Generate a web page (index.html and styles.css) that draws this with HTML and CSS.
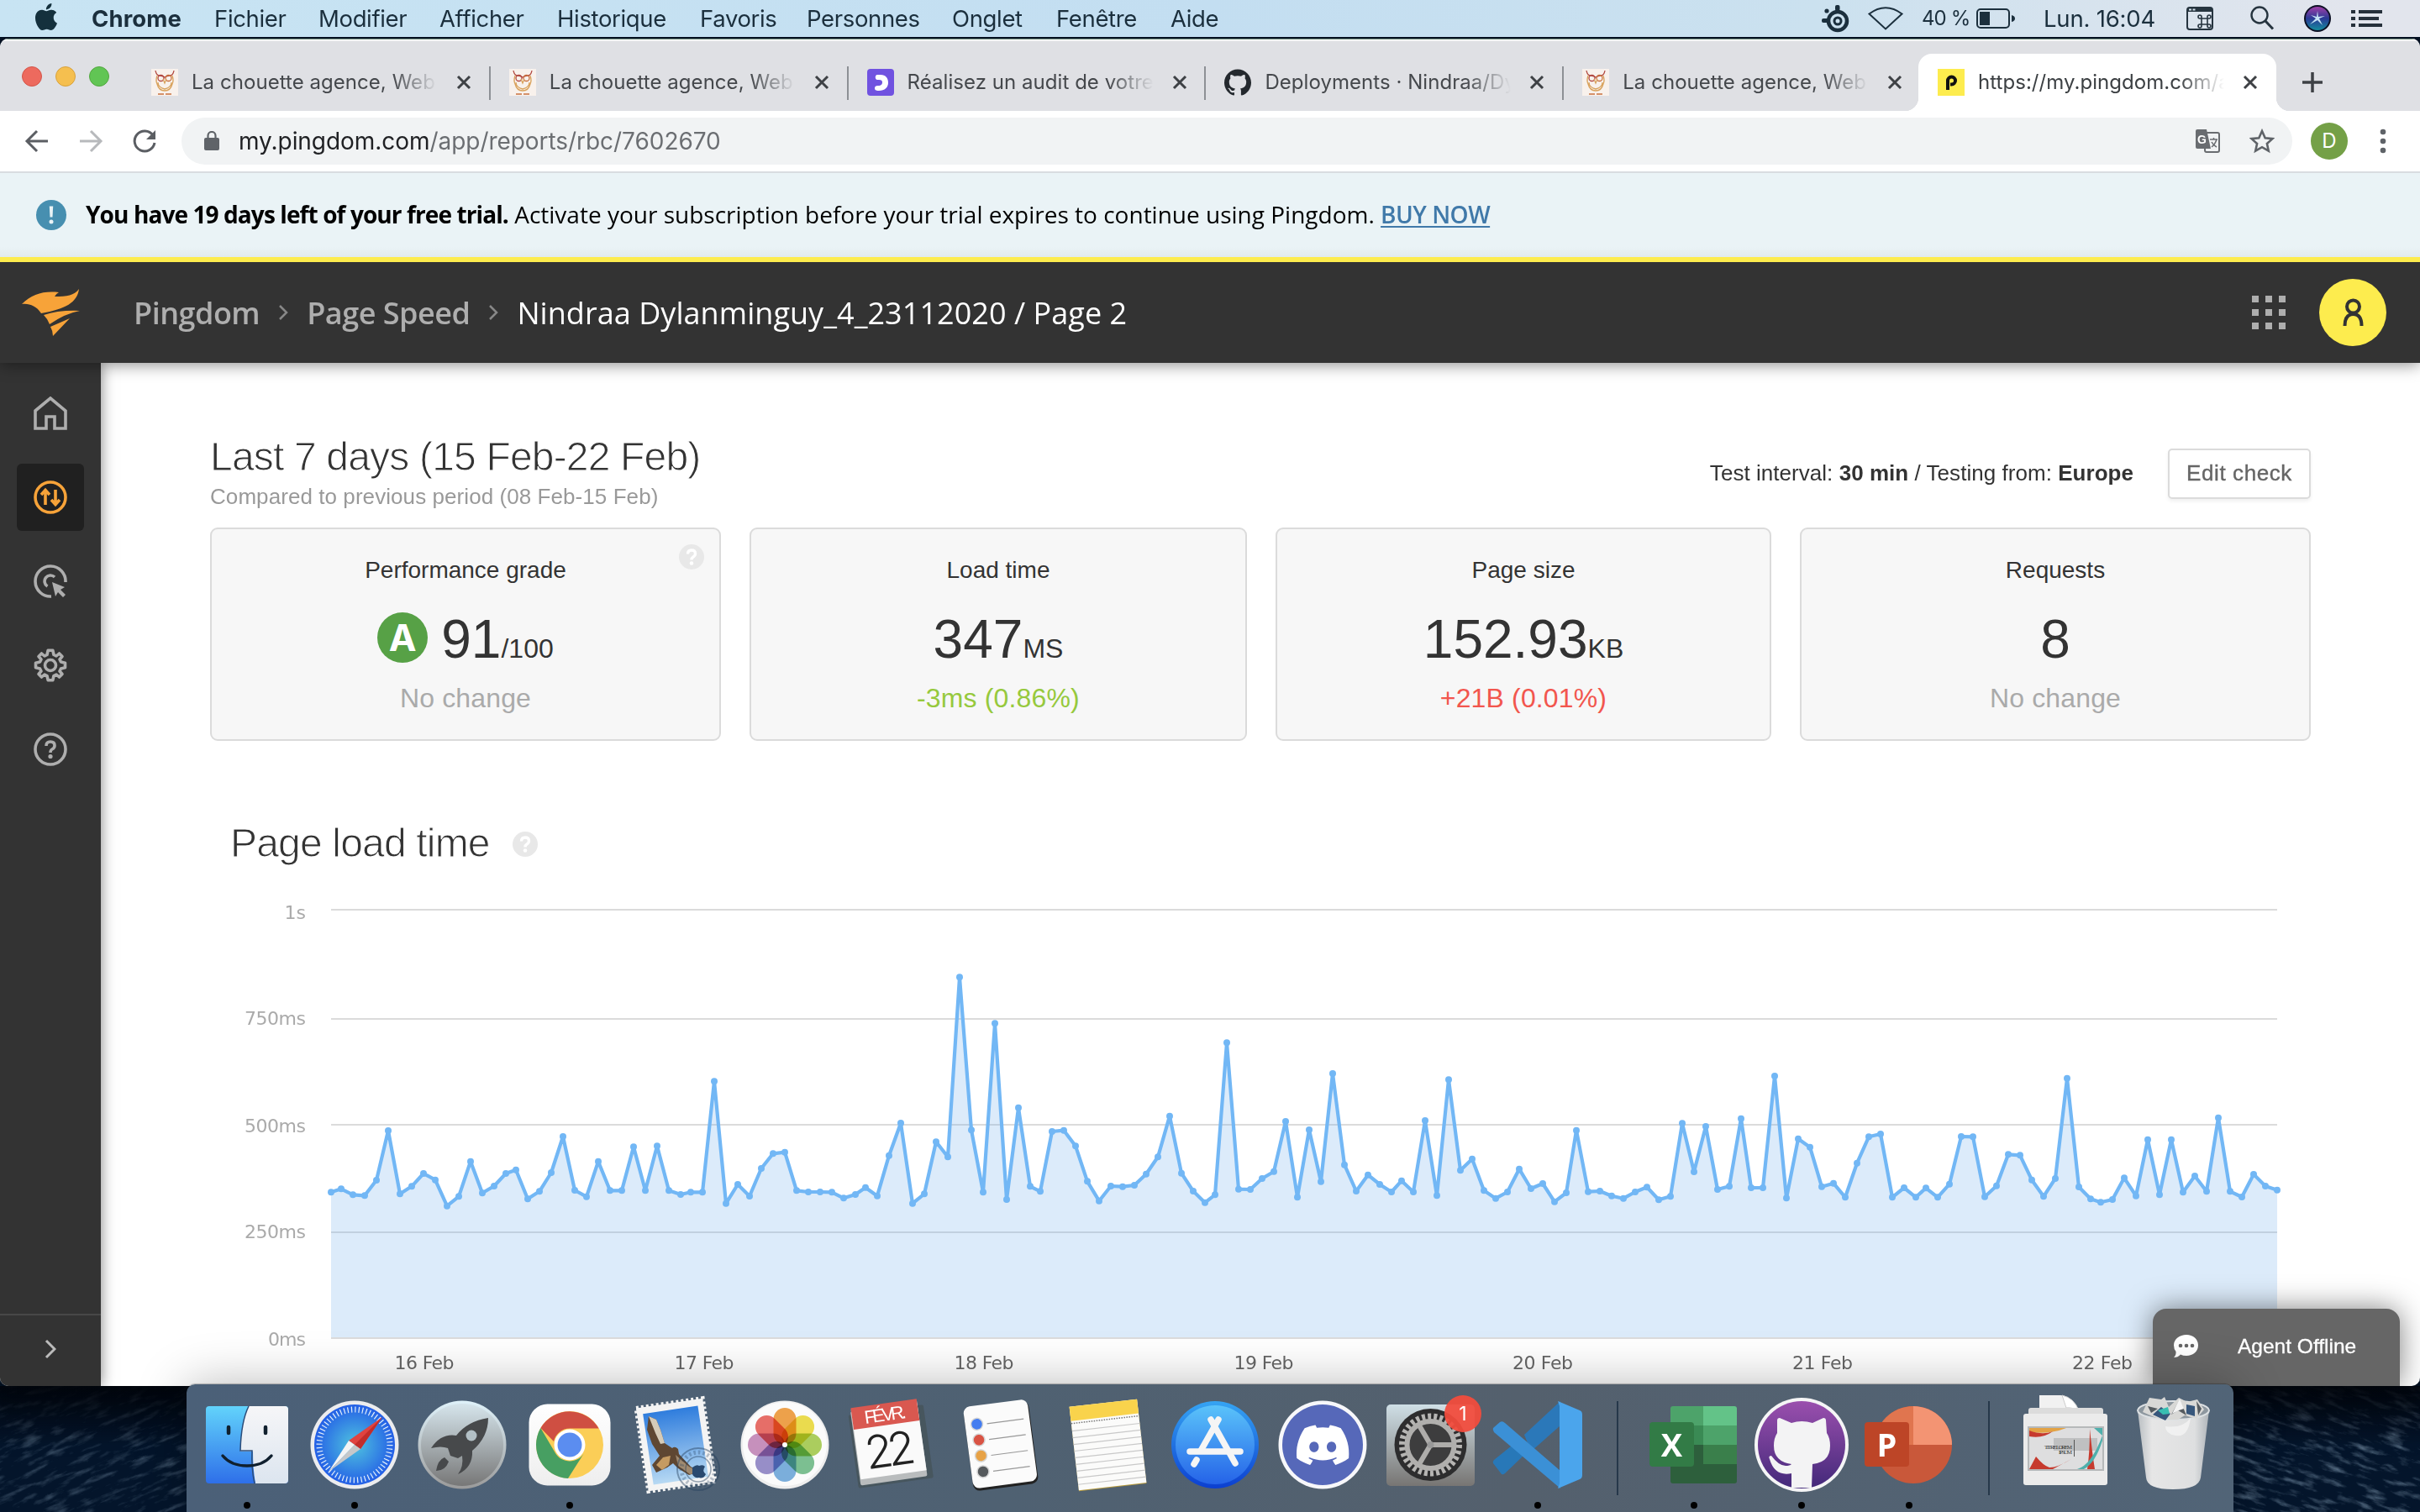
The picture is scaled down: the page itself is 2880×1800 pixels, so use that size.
FILE: index.html
```html
<!DOCTYPE html>
<html lang="fr">
<head>
<meta charset="utf-8">
<title>Pingdom</title>
<link rel="stylesheet" href="styles.css">
</head>
<body>
<svg class="sea" width="2880" height="1800" aria-hidden="true">
  <defs>
    <filter id="waves" x="0" y="0" width="100%" height="100%">
      <feTurbulence type="fractalNoise" baseFrequency="0.035 0.14" numOctaves="5" seed="8"/>
      <feColorMatrix values="0 0 0 0 0.30  0 0 0 0 0.43  0 0 0 0 0.56  2.4 0 0 0 -1.2"/>
    </filter>
    <linearGradient id="deep" x1="0" y1="0" x2="0" y2="1"><stop offset="0" stop-color="#02060f" stop-opacity=".85"/><stop offset="1" stop-color="#02060f" stop-opacity="0"/></linearGradient>
  </defs>
  <rect width="2880" height="1800" fill="#04152b"/>
  <g opacity=".6"><g transform="rotate(-22 110 1720)"><rect x="-200" y="1500" width="700" height="500" filter="url(#waves)" opacity=".65"/></g>
  <g transform="rotate(18 2770 1720)"><rect x="2400" y="1450" width="760" height="560" filter="url(#waves)"/></g></g>
  <rect y="1650" width="2880" height="70" fill="url(#deep)"/>
</svg>

<header class="menubar">
  <nav class="menus">
    <svg class="apple" viewBox="0 0 24 24"><path d="M12.152 6.896c-.948 0-2.415-1.078-3.96-1.04-2.04.027-3.91 1.183-4.961 3.014-2.117 3.675-.546 9.103 1.519 12.09 1.013 1.454 2.208 3.09 3.792 3.039 1.52-.065 2.09-.987 3.935-.987 1.831 0 2.35.987 3.96.948 1.637-.026 2.676-1.48 3.676-2.948 1.156-1.688 1.636-3.325 1.662-3.415-.039-.013-3.182-1.221-3.22-4.857-.026-3.04 2.48-4.494 2.597-4.559-1.429-2.09-3.623-2.324-4.39-2.376-2-.156-3.675 1.09-4.61 1.09zM15.53 3.83c.843-1.012 1.4-2.427 1.245-3.83-1.207.052-2.662.805-3.532 1.818-.78.896-1.454 2.338-1.273 3.714 1.338.104 2.715-.688 3.559-1.701"/></svg>
    <b>Chrome</b><span>Fichier</span><span>Modifier</span><span>Afficher</span><span>Historique</span><span>Favoris</span><span>Personnes</span><span>Onglet</span><span>Fenêtre</span><span>Aide</span>
  </nav>
  <div class="status">
    <svg width="34" height="36" viewBox="0 0 34 36"><g fill="none" stroke="#1b2f3d"><circle cx="19" cy="21" r="11" stroke-width="4.5"/><circle cx="19" cy="21" r="4" stroke-width="3"/></g><rect x="16" y="2" width="5.500" height="7" rx="2" fill="#1b2f3d"/><rect x="0" y="18" width="8" height="5" rx="2" fill="#1b2f3d"/><circle cx="6" cy="9" r="2.600" fill="#1b2f3d"/></svg>
    <svg width="42" height="30" viewBox="0 0 42 30"><path d="M1.500 9.500Q21-5 40.500 9.500L21 27.500Z" fill="none" stroke="#1b2f3d" stroke-width="2"/></svg>
    <span class="percent">40 %</span>
    <svg width="48" height="26" viewBox="0 0 48 26"><rect x="1" y="2" width="38" height="22" rx="4" fill="none" stroke="#1b2f3d" stroke-width="2"/><rect x="4" y="5" width="12" height="16" fill="#1b2f3d"/><path d="M42 9q4 1 4 4t-4 4z" fill="#1b2f3d"/></svg>
    <span class="clock">Lun. 16:04</span>
    <svg width="32" height="28" viewBox="0 0 32 28"><rect x="1" y="1" width="30" height="26" rx="3" fill="none" stroke="#26343f" stroke-width="2"/><path d="M1 1h30v5H1z" fill="#26343f"/><path d="M3 2.500h3v2H3zM7.500 2.500h3v2h-3z" fill="#d5e3ee"/><path d="M18 14h7v7h-7zM18 14h-2a2 2 0 1 1 2-2zM25 14v-2a2 2 0 1 1 2 2zM18 21v2a2 2 0 1 1-2-2zM25 21h2a2 2 0 1 1-2 2z" fill="none" stroke="#26343f" stroke-width="1.600"/></svg>
    <svg width="32" height="32" viewBox="0 0 32 32"><g fill="none" stroke="#26343f" stroke-width="2.400"><circle cx="13" cy="12" r="9.500"/><path d="M20 19l9 9.500" stroke-width="3"/></g></svg>
    <svg width="32" height="32" viewBox="0 0 32 32"><defs><linearGradient id="siri" x1="0" y1="0" x2="0" y2="1"><stop offset="0" stop-color="#a03fa8"/><stop offset=".5" stop-color="#2a3a96"/><stop offset="1" stop-color="#148c9d"/></linearGradient></defs><circle cx="16" cy="16" r="16" fill="#0c1024"/><circle cx="16" cy="16" r="14" fill="url(#siri)"/><path d="M16 7l1 7 8-1-7 3 4 8-6-6-9 5 7-7-6-4 7 2z" fill="#d5f4ff" opacity=".9"/></svg>
    <svg width="38" height="22" viewBox="0 0 38 22"><path d="M0 1h5v4H0zM9 1h28v4H9zM0 9h5v4H0zM9 9h24v4H9zM0 17h5v4H0zM9 17h28v4H9z" fill="#26303b"/></svg>
  </div>
</header>

<div class="window">
  <div class="tabstrip">
    <div class="lights"><i class="red"></i><i class="amber"></i><i class="green"></i></div>
    <div class="tab"><svg class="fav" viewBox="0 0 32 32"><use href="#owl"/></svg><span class="label">La chouette agence, Web D</span><svg class="close" viewBox="0 0 18 18"><path d="M2 2l14 14M16 2L2 16"/></svg></div>
    <div class="tab"><svg class="fav" viewBox="0 0 32 32"><use href="#owl"/></svg><span class="label">La chouette agence, Web D</span><svg class="close" viewBox="0 0 18 18"><path d="M2 2l14 14M16 2L2 16"/></svg></div>
    <div class="tab"><svg class="fav" viewBox="0 0 32 32"><rect width="32" height="32" rx="4" fill="#7052e0"/><path d="M12 7h4c6 0 9 4 9 9.500S21 26 14 26c-4 0-5-1-5-3s1-3 4-3c4 0 5-2 5-4s-1-3-4-3h-2c-3 0-3-6 0-6z" fill="#fff"/></svg><span class="label">Réalisez un audit de votre s</span><svg class="close" viewBox="0 0 18 18"><path d="M2 2l14 14M16 2L2 16"/></svg></div>
    <div class="tab"><svg class="fav" viewBox="0 0 24 24"><use href="#octocat" fill="#24292e"/></svg><span class="label">Deployments · Nindraa/Dyla</span><svg class="close" viewBox="0 0 18 18"><path d="M2 2l14 14M16 2L2 16"/></svg></div>
    <div class="tab last"><svg class="fav" viewBox="0 0 32 32"><use href="#owl"/></svg><span class="label">La chouette agence, Web D</span><svg class="close" viewBox="0 0 18 18"><path d="M2 2l14 14M16 2L2 16"/></svg></div>
    <div class="tab active"><svg class="fav" viewBox="0 0 32 32"><path fill="#fdec4e" d="M0 0h32v32H0z"/><path d="M12 25V14a4.500 4.500 0 1 1 4.500 4.500H15" fill="none" stroke="#111" stroke-width="4"/></svg><span class="label">https://my.pingdom.com/ap</span><svg class="close" viewBox="0 0 18 18"><path d="M2 2l14 14M16 2L2 16"/></svg></div>
    <svg class="newtab" viewBox="0 0 24 24"><path d="M12 0v24M0 12h24"/></svg>
  </div>

  <div class="toolbar">
    <svg class="nav" viewBox="0 0 32 32"><path d="M29 16H5M16 4L4 16l12 12" stroke="#5b5e63"/></svg>
    <svg class="nav" viewBox="0 0 32 32"><path d="M3 16h24M16 4l12 12-12 12" stroke="#b7b9bc"/></svg>
    <svg class="nav" viewBox="0 0 32 32"><path d="M26 9A12 12 0 1 0 28 18" stroke="#5b5e63"/><path d="M29 3v11H18z" fill="#5b5e63"/></svg>
    <div class="omnibox">
      <svg width="18" height="24" viewBox="0 0 18 24"><rect y="8" width="18" height="15" rx="2" fill="#5f6368"/><path d="M4.500 9V5.500a4.500 4.500 0 0 1 9 0V9" fill="none" stroke="#5f6368" stroke-width="2.200"/></svg>
      <span class="url">my.pingdom.com<em>/app/reports/rbc/7602670</em></span>
      <svg class="translate" width="30" height="30" viewBox="0 0 30 30"><rect x="11" y="5" width="17" height="23" rx="2" fill="none" stroke="#696c70" stroke-width="2"/><path d="M2 1h11l5 23H2a2 2 0 0 1-2-2V3a2 2 0 0 1 2-2z" fill="#696c70"/><text x="2" y="18" font-size="14" fill="#fff" class="g">G</text><path d="M17 13h9M21.500 11v2M25 13q-2 6-6 9M19 16q2 4 6 6" fill="none" stroke="#696c70" stroke-width="1.500"/></svg>
      <svg width="30" height="30" viewBox="0 0 30 30"><path d="M15 3l3.700 8.200 8.800.9-6.600 5.900 1.900 8.700L15 22.200l-7.800 4.500L9.100 18 2.500 12.100l8.800-.9z" fill="none" stroke="#5f6368" stroke-width="2.600"/></svg>
    </div>
    <div class="profile">D</div>
    <svg class="kebab" viewBox="0 0 8 30"><circle cx="4" cy="4" r="3.300"/><circle cx="4" cy="15" r="3.300"/><circle cx="4" cy="26" r="3.300"/></svg>
  </div>

  <div class="trial">
    <svg width="36" height="36" viewBox="0 0 36 36"><circle cx="18" cy="18" r="18" fill="#478fb0"/><path d="M15.800 7.500h4.400l-.7 13h-3z" fill="#eaf3f6"/><circle cx="18" cy="26" r="2.500" fill="#eaf3f6"/></svg>
    <p><b>You have 19 days left of your free trial.</b> <span>Activate your subscription before your trial expires to continue using Pingdom.</span> <a>BUY NOW</a></p>
  </div>

  <div class="appbar">
    <svg class="logo" viewBox="0 0 70 56"><g fill="#f7a339"><path d="M0 18C12 6 26 2 44 4q-3 1.500-5 5C54 9 62 8 68 0 66 16 52 24 23 29 17 20 9 17 0 18z"/><path d="M26 31Q44 25 69 26 52 29 33 42 31 36 26 31z"/><path d="M34 45L57 35 37 56Q37 50 34 45z"/></g></svg>
    <div class="crumbs">
      <b>Pingdom</b><svg viewBox="0 0 12 20"><path d="M2 2l8 8-8 8"/></svg><b>Page Speed</b><svg viewBox="0 0 12 20"><path d="M2 2l8 8-8 8"/></svg><span>Nindraa Dylanminguy_4_23112020 / Page 2</span>
    </div>
    <svg class="waffle" viewBox="0 0 40 40"><path d="M0 0h8v8H0zM16 0h8v8h-8zM32 0h8v8h-8zM0 16h8v8H0zM16 16h8v8h-8zM32 16h8v8h-8zM0 32h8v8H0zM16 32h8v8h-8zM32 32h8v8h-8z" fill="#aeaeae"/></svg>
    <div class="user"><svg viewBox="0 0 24 34"><g fill="none" stroke="#333" stroke-width="4"><circle cx="12" cy="10" r="7.500"/><path d="M2 33q0-14 10-14t10 14"/></g></svg></div>
  </div>

  <div class="workspace">
    <aside class="sidebar">
      <div class="item"><svg viewBox="0 0 40 40"><path d="M2 17L20 2l18 15v21H25V24h-10v14H2z"/></svg></div>
      <div class="item on"><svg viewBox="0 0 40 40"><circle cx="20" cy="20" r="18"/><path d="M14 29V12m-5 5l5-5.500L19 17M26 11v17m-5-5l5 5.500 5-5.500"/></svg></div>
      <div class="item"><svg viewBox="0 0 40 40"><path d="M38 21A18 18 0 1 0 21 38M25 15a7 7 0 1 0-8.500 11"/><path d="M22 21l15 6-5 3 6 6-3 3-6-6-3 5z" fill="#aeaeae" stroke="none"/></svg></div>
      <div class="item"><svg viewBox="-20 -20 40 40"><path stroke-linejoin="round" d="M12.500-4L17.500-2.800V2.800L12.500 4 11 7 14 10.500 10.500 14 7 11 4 12.500 2.800 17.800H-2.800L-4 12.500-7 11-10.500 14-14 10.500-11 7-12.500 4-17.500 2.800V-2.800L-12.500-4-11-7-14-10.500-10.500-14-7-11-4-12.500-2.800-17.800H2.800L4-12.500 7-11 10.500-14 14-10.500 11-7z"/><circle r="6.500"/></svg></div>
      <div class="item"><svg viewBox="0 0 40 40"><circle cx="20" cy="20" r="18"/><path d="M15 16q0-5 5-5t5 4.500q0 3-3 4.500-2 1-2 4"/><circle cx="20" cy="28.500" r="2.600" fill="#aeaeae" stroke="none"/></svg></div>
      <div class="expand"><svg viewBox="0 0 14 24"><path d="M2 2l10 10L2 22"/></svg></div>
    </aside>

    <main>
      <div class="summary">
        <div class="period"><h1>Last 7 days (15 Feb-22 Feb)</h1><p>Compared to previous period (08 Feb-15 Feb)</p></div>
        <p class="interval">Test interval: <b>30 min</b> / Testing from: <b>Europe</b></p>
        <button class="edit">Edit check</button>
      </div>

      <div class="cards">
        <section class="card"><svg class="hint corner" viewBox="0 0 30 30"><use href="#hint"/></svg><h2>Performance grade</h2><div class="value"><span class="grade">A</span>91<small>/100</small></div><p>No change</p></section>
        <section class="card"><h2>Load time</h2><div class="value">347<small>MS</small></div><p class="good">-3ms (0.86%)</p></section>
        <section class="card"><h2>Page size</h2><div class="value">152.93<small>KB</small></div><p class="bad">+21B (0.01%)</p></section>
        <section class="card"><h2>Requests</h2><div class="value">8</div><p>No change</p></section>
      </div>

      <div class="chart-head"><h1>Page load time</h1><svg class="hint" viewBox="0 0 30 30"><use href="#hint"/></svg></div>
      <svg class="chart" viewBox="270 1060 2480 590">
        <g fill="#dbdbdb"><path d="M394 1082h2316v2H394zM394 1212h2316v2H394zM394 1338h2316v2H394zM394 1466h2316v2H394zM394 1592h2316v2H394z"/></g>
        <polygon id="area" fill="#7cb5ec" fill-opacity=".27"/>
        <polyline id="line" fill="none" stroke="#72b7f5" stroke-width="4.200" stroke-linejoin="round"/>
        <g id="dots" fill="#72b7f5"></g>
        <g class="ylabels">
          <text x="364" y="1094">1s</text><text x="364" y="1220" textLength="73">750ms</text><text x="364" y="1348" textLength="73">500ms</text><text x="364" y="1474" textLength="73">250ms</text><text x="364" y="1602" textLength="45">0ms</text>
        </g>
        <g class="xlabels">
          <text x="505" y="1630" textLength="71">16 Feb</text><text x="838" y="1630" textLength="71">17 Feb</text><text x="1171" y="1630" textLength="71">18 Feb</text><text x="1504" y="1630" textLength="71">19 Feb</text><text x="1836" y="1630" textLength="72">20 Feb</text><text x="2169" y="1630" textLength="72">21 Feb</text><text x="2502" y="1630" textLength="72">22 Feb</text>
        </g>
      </svg>
    </main>
  </div>

  <div class="agent"><svg viewBox="0 0 30 28"><path d="M15 0C23 0 29 5 29 12.500S23 25 15 25q-4 0-7-1.500Q5 27 0 27q3-3 2.500-7Q0 17 0 12.500C0 5 7 0 15 0z" fill="#fff"/><g fill="#666"><circle cx="8" cy="13" r="2.300"/><circle cx="15" cy="13" r="2.300"/><circle cx="22" cy="13" r="2.300"/></g></svg><span>Agent Offline</span></div>
</div>

<div class="dock">
  <svg class="app" viewBox="0 0 128 152"><defs><linearGradient id="fb" x1="0" y1="0" x2="0" y2="1"><stop offset="0" stop-color="#62d3fb"/><stop offset="1" stop-color="#2e6fe9"/></linearGradient><linearGradient id="fw" x1="0" y1="0" x2="0" y2="1"><stop offset="0" stop-color="#f6f6f8"/><stop offset="1" stop-color="#dce5ef"/></linearGradient></defs><rect x="15" y="26" width="98" height="92" rx="4" fill="url(#fb)"/><path d="M66 26h43q4 0 4 4v84q0 4-4 4H74q-3-17-3-38H56q1-36 10-54z" fill="url(#fw)"/><path d="M66 26q-9 18-10 53h14q-1 21 3 39" fill="none" stroke="#2b4c78" stroke-width="1.500"/><path d="M42 51v7M86 51v7" stroke="#10202e" stroke-width="4.500" stroke-linecap="round"/><path d="M35 85q10 12 29 12t29-12" fill="none" stroke="#10202e" stroke-width="3.500" stroke-linecap="round"/><circle class="run" cx="64" cy="144" r="4"/></svg>

  <svg class="app" viewBox="0 0 128 152"><defs><radialGradient id="sf"><stop offset="0" stop-color="#4fc3df"/><stop offset="1" stop-color="#245fe6"/></radialGradient></defs><circle cx="64" cy="72" r="52.500" fill="#ececee"/><circle cx="64" cy="72" r="48" fill="url(#sf)"/><circle cx="64" cy="72" r="42" fill="none" stroke="#e5f0fb" stroke-width="7" stroke-dasharray="1.200 3.198"/><path d="M97 39L71 77 57 67z" fill="#e04340"/><path d="M97 39L71 77 64 72z" fill="#c22d2b"/><path d="M33 104L57 67 64 72z" fill="#f4f4f4"/><path d="M33 104L71 77 64 72z" fill="#c6c8ca"/><circle class="run" cx="64" cy="144" r="4"/></svg>

  <svg class="app" viewBox="0 0 128 152"><defs><linearGradient id="lp" x1="0" y1="0" x2="0" y2="1"><stop offset="0" stop-color="#d6e5ec"/><stop offset="1" stop-color="#777"/></linearGradient><linearGradient id="lr" x1="0" y1="0" x2="0" y2="1"><stop offset="0" stop-color="#dff2fa"/><stop offset="1" stop-color="#9a9a9a"/></linearGradient></defs><circle cx="64" cy="72" r="52.500" fill="url(#lr)"/><circle cx="64" cy="72" r="49" fill="url(#lp)"/><path d="M95 40Q70 44 57 61 39 58 27 76q12-3 20 0l3 9 9 3 5-3q2 13-5 22 18-8 17-28Q95 63 95 40z" fill="#47494b"/><circle cx="75" cy="61" r="6.500" fill="#b3c0c6"/><path d="M43 87q-8 3-10 16 11 0 15-11z" fill="#47494b"/></svg>

  <svg class="app" viewBox="0 0 128 152"><defs><linearGradient id="cw" x1="0" y1="0" x2="0" y2="1"><stop offset="0" stop-color="#fff"/><stop offset="1" stop-color="#eee"/></linearGradient></defs><rect x="15.500" y="23.500" width="97" height="97" rx="22" fill="url(#cw)"/><circle cx="64" cy="72" r="40" fill="#fbce57"/><path d="M29.400 52A40 40 0 0 1 98.600 52.500H64A19.500 19.500 0 0 0 45 68z" fill="#cf4f42"/><path d="M29.400 52A40 40 0 0 0 62 112L81 82A20 20 0 0 1 47 82z" fill="#479f62"/><circle cx="64" cy="72" r="18.500" fill="#fff"/><circle cx="64" cy="72" r="14.500" fill="#5b8df0"/><circle class="run" cx="64" cy="144" r="4"/></svg>

  <svg class="app" viewBox="0 0 128 152"><defs><linearGradient id="ml" x1="0" y1="0" x2="0" y2="1"><stop offset="0" stop-color="#2f7ddd"/><stop offset="1" stop-color="#b7d9f3"/></linearGradient></defs><g transform="rotate(-8.500 62 72)"><rect x="22" y="22" width="80" height="100" fill="#f4f4f4"/><rect x="22" y="22" width="80" height="100" fill="none" stroke="#f4f4f4" stroke-width="5" stroke-dasharray="3 3"/><rect x="29" y="30" width="66" height="85" fill="url(#ml)"/></g><path d="M30 38l9 4 5 12 5 16 9 6q3-3 7 1l1 6 14 15 11 6-13 4-13-8-6-6-7 5-13 6-5-9 9-11-9-14-6-17z" fill="#5f4732"/><path d="M30 38l9 4 5 12 5 16-5 1-6-13z" fill="#d5cbb8"/><path d="M39 96l8-9 9-2-2 11-8 6z" fill="#c59b62"/><path d="M62 84l16 14 14 7-13 2-14-10z" fill="#a08a70"/><g fill="none" stroke="#26405e" stroke-opacity=".45" stroke-width="2"><circle cx="89" cy="101" r="25"/><circle cx="89" cy="101" r="20" stroke-width="5" stroke-dasharray="2.500 3" stroke-opacity=".3"/><circle cx="89" cy="101" r="15" stroke-width="1.500"/></g><path d="M82 99q5-4 8-2 5-2 7 1-4 5 1 9-3 6-8 4-6 1-8-4z" fill="#2a4a70"/></svg>

  <svg class="app" viewBox="0 0 128 152"><circle cx="64" cy="72" r="52.500" fill="#eeeeee"/><circle cx="64" cy="71" r="50" fill="#fbfbfb"/><g class="petals"><rect x="50.500" y="28" width="27" height="44" rx="13.500" fill="#f09a38"/><rect x="50.500" y="28" width="27" height="44" rx="13.500" fill="#ecdc3c" transform="rotate(45 64 72)"/><rect x="50.500" y="28" width="27" height="44" rx="13.500" fill="#a5cc4d" transform="rotate(90 64 72)"/><rect x="50.500" y="28" width="27" height="44" rx="13.500" fill="#70bb87" transform="rotate(135 64 72)"/><rect x="50.500" y="28" width="27" height="44" rx="13.500" fill="#6fa9dc" transform="rotate(180 64 72)"/><rect x="50.500" y="28" width="27" height="44" rx="13.500" fill="#8e84c6" transform="rotate(225 64 72)"/><rect x="50.500" y="28" width="27" height="44" rx="13.500" fill="#c386b8" transform="rotate(270 64 72)"/><rect x="50.500" y="28" width="27" height="44" rx="13.500" fill="#e8605a" transform="rotate(315 64 72)"/></g><circle cx="64" cy="72" r="3" fill="#fff"/></svg>

  <svg class="app" viewBox="0 0 128 152"><g transform="rotate(-8 62 72)"><rect x="17" y="30" width="90" height="88" rx="2" fill="#47565e"/><rect x="20" y="26" width="80" height="89" rx="2" fill="#b9bcbd"/><rect x="21" y="24" width="79" height="84" fill="#fafafa"/><rect x="21" y="22" width="79" height="26" fill="#d95850"/><text x="60.500" y="43" class="month" textLength="50">FÉVR.</text><text x="60.500" y="97" class="day" textLength="60">22</text></g></svg>

  <svg class="app" viewBox="0 0 128 152"><g transform="rotate(-7.500 64 72)"><rect x="26" y="24" width="78" height="99" rx="8" fill="#222"/><rect x="26" y="22" width="77" height="98" rx="8" fill="#fbfbfb"/><g stroke="#999" stroke-width="1.200"><path d="M52 45h44M52 64h44M52 83h44M52 102h44"/></g><g stroke="#d5d5d5" stroke-width="1.500"><circle cx="40" cy="44" r="7" fill="#447df0"/><circle cx="40" cy="63" r="7" fill="#d95344"/><circle cx="40" cy="82" r="7" fill="#e7a246"/><circle cx="40" cy="101" r="7" fill="#55595c"/></g></g></svg>

  <svg class="app" viewBox="0 0 128 152"><g transform="rotate(-6.500 64 72)"><rect x="24" y="22" width="81" height="101" fill="#b69a3c"/><rect x="24" y="22" width="81" height="100" fill="#fbfbfa"/><rect x="24" y="22" width="81" height="17" fill="#f9d34c"/><path d="M24 42h81" stroke="#777" stroke-width="1.500" stroke-dasharray="1.500 1.500"/><path d="M24 51h81M24 59h81M24 67h81M24 75h81M24 83h81M24 91h81M24 99h81M24 107h81M24 115h81" stroke="#c9c9c9" stroke-width="1.200"/></g></svg>

  <svg class="app" viewBox="0 0 128 152"><defs><linearGradient id="as" x1="0" y1="0" x2="0" y2="1"><stop offset="0" stop-color="#5ac3fa"/><stop offset="1" stop-color="#2563e8"/></linearGradient><linearGradient id="ao" x1="0" y1="0" x2="0" y2="1"><stop offset="0" stop-color="#35a4f3"/><stop offset="1" stop-color="#0c3fd0"/></linearGradient></defs><circle cx="64" cy="72" r="52" fill="url(#ao)"/><circle cx="64" cy="72" r="47" fill="url(#as)"/><g stroke="#f5f5f5" stroke-width="7.500" stroke-linecap="round"><path d="M34 80h60"/><path d="M59 42L88 94M68 42L47 79M42 90l-3 5"/></g></svg>

  <svg class="app" viewBox="0 0 128 152"><circle cx="64" cy="72" r="52.500" fill="#f7f7fa"/><circle cx="64" cy="72" r="48" fill="#5668b9"/><path fill="#fff" transform="translate(33 41) scale(2.600)" d="M20.317 4.370a19.790 19.790 0 00-4.885-1.515.074.074 0 00-.079.037c-.211.375-.445.865-.608 1.250-1.845-.276-3.680-.276-5.487 0-.164-.393-.406-.874-.618-1.250a.077.077 0 00-.079-.037 19.736 19.736 0 00-4.885 1.515.070.070 0 00-.032.028C.533 9.046-.319 13.580.099 18.058a.082.082 0 00.031.056c2.053 1.508 4.041 2.423 5.993 3.029a.078.078 0 00.084-.028c.462-.630.873-1.295 1.226-1.994a.076.076 0 00-.042-.106c-.653-.248-1.274-.550-1.872-.892a.077.077 0 01-.008-.128c.126-.094.252-.192.372-.291a.074.074 0 01.078-.011c3.928 1.793 8.180 1.793 12.061 0a.074.074 0 01.079.010c.120.099.246.198.373.292a.077.077 0 01-.007.128 12.299 12.299 0 01-1.873.891.077.077 0 00-.041.107c.360.698.772 1.363 1.225 1.993a.076.076 0 00.084.029c1.961-.607 3.950-1.522 6.002-3.029a.077.077 0 00.031-.055c.500-5.177-.838-9.674-3.549-13.660a.061.061 0 00-.031-.029zM8.020 15.331c-1.183 0-2.157-1.086-2.157-2.419 0-1.333.956-2.419 2.157-2.419 1.211 0 2.176 1.095 2.157 2.419 0 1.333-.956 2.419-2.157 2.419zm7.975 0c-1.183 0-2.157-1.086-2.157-2.419 0-1.333.955-2.419 2.157-2.419 1.211 0 2.176 1.095 2.157 2.419 0 1.333-.946 2.419-2.157 2.419z"/></svg>

  <svg class="app" viewBox="0 0 128 152"><defs><linearGradient id="sg" x1="0" y1="0" x2="0" y2="1"><stop offset="0" stop-color="#cfdfe6"/><stop offset="1" stop-color="#777573"/></linearGradient></defs><rect x="12" y="24" width="105" height="97" rx="5" fill="url(#sg)"/><circle cx="64.500" cy="72" r="43" fill="#2d2d2e"/><circle cx="64.500" cy="72" r="34" fill="none" stroke="#b6b5b3" stroke-width="7" stroke-dasharray="4 3.120"/><circle cx="64.500" cy="72" r="28" fill="#3d3d3e" stroke="#b0afad" stroke-width="6"/><g stroke="#aeadab" stroke-width="6"><path d="M64.500 72h26M64.500 72L51 49M64.500 72L51 95"/></g><circle cx="64.500" cy="72" r="4" fill="#999"/><circle cx="103" cy="35" r="22" fill="#f24b3d" fill-opacity=".94"/><text x="103" y="43" class="badge">1</text></svg>

  <svg class="app" viewBox="0 0 128 152"><path d="M91 20l-43 40 8 20 35-31z" fill="#2b78b9"/><path d="M11 94l10 13q2 1 4-1l23-22-10-15-26 21q-2 2-1 4z" fill="#2878b8"/><path d="M11 52l8-7q3-2 6 1l66 57v21L12 57q-2-3-1-5z" fill="#3b90d6"/><path d="M88 20l26 11q3 1 3 5v72q0 4-3 5l-26 11 2-6V26z" fill="#4ba5ec"/><circle class="run" cx="64" cy="144" r="4"/></svg>

  <span class="divider"></span>

  <svg class="app" viewBox="0 0 128 152"><path d="M39 26h36v23H36V29q0-3 3-3z" fill="#4da36a"/><path d="M75 26h37q3 0 3 3v20H75z" fill="#63c388"/><path d="M36 49h39v23H36z" fill="#3a8a54"/><path d="M75 49h40v23H75z" fill="#4da36a"/><path d="M36 72h39v46H39q-3 0-3-3z" fill="#2d5f3c"/><path d="M75 72h40v23H75z" fill="#3a7f4b"/><path d="M75 95h40v20q0 3-3 3H75z" fill="#2d5f3c"/><rect x="11" y="45" width="53" height="53" rx="4" fill="#327b46"/><text x="37.500" y="86" class="office">X</text><circle class="run" cx="64" cy="144" r="4"/></svg>

  <svg class="app" viewBox="0 0 128 152"><defs><linearGradient id="gh" x1="0" y1="0" x2="0" y2="1"><stop offset="0" stop-color="#9a4fae"/><stop offset="1" stop-color="#43297a"/></linearGradient></defs><circle cx="64" cy="72" r="56" fill="#f5f5f6"/><circle cx="64" cy="72" r="52" fill="url(#gh)"/><path d="M35 43q0-3 3-3l14 6q12-4 25 0l13-6q3 0 3 3l1 15q4 6 4 15 0 20-21 22l-1 28H52V106q-20 4-26-17-2-4 2-4 9 12 17 12 5 0 7-2Q31 92 31 73q0-9 4-15z" fill="#f3f3f4"/><circle class="run" cx="64" cy="144" r="4"/></svg>

  <svg class="app" viewBox="0 0 128 152"><circle cx="69" cy="72" r="46" fill="#c9583a"/><path d="M69 26a46 46 0 0 0-46 46h46z" fill="#e0754f"/><path d="M69 26a46 46 0 0 1 46 46H69z" fill="#f39473"/><rect x="11" y="45" width="53" height="53" rx="4" fill="#bd4527"/><text x="37.500" y="86" class="office">P</text><circle class="run" cx="64" cy="144" r="4"/></svg>

  <span class="divider"></span>

  <svg class="app" viewBox="0 0 128 152"><path d="M33 13h25q12 0 22 18H33z" fill="#f1f1f1"/><path d="M60 13q14 3 20 18-10-4-15-3z" fill="#fff" stroke="#ccc"/><rect x="20" y="28" width="89" height="12" rx="3" fill="#dcdcdc"/><rect x="14" y="35" width="100" height="85" rx="3" fill="#ebebeb"/><rect x="19" y="50" width="91" height="53" fill="#b6b9ba"/><rect x="21" y="52" width="87" height="49" fill="#dededf"/><path d="M21 52h44Q45 60 21 57z" fill="#e3a244"/><path d="M21 55q16 6 28 1-12 9-28 6z" fill="#c63a2e"/><path d="M50 64h52v15H50z" fill="#bfc0c1"/><path d="M21 101l8-15q9 11 16 13 10 0 26-10l-22 12zM90 101q3-18 3-48 3 30 6 48z" fill="#c63a2e"/><path d="M78 101q17-5 30-40v6q-8 26-22 34zM98 52l10 9V52z" fill="#4fb0ac"/><text x="39" y="77" class="slide" textLength="33">TITRE LOREM</text><text x="56" y="83" class="slide" textLength="16">IPSUM</text><path d="M74.500 66v20" stroke="#555"/></svg>

  <svg class="app" viewBox="0 0 128 152"><defs><linearGradient id="tr" x1="0" y1="0" x2="1" y2="0"><stop offset="0" stop-color="#b9bec2"/><stop offset=".2" stop-color="#e6e6e6"/><stop offset=".8" stop-color="#dedfe0"/><stop offset="1" stop-color="#aeb4b9"/></linearGradient></defs><path d="M22 31l10 80q1 14 32 14t33-14l10-80z" fill="url(#tr)"/><ellipse cx="64.500" cy="31" rx="42.500" ry="11" fill="#8d979f" stroke="#dde1e4" stroke-width="2"/><path d="M28 33l8-17 14 2 4-3 5 12 12-11 10 5 12-3 8 12-9 11-14-4-8 5-14 0-12-2z" fill="#d8d8d6"/><path d="M40 36l10-9 11 8-6 8zM80 24l10 2 0 12-10-3z" fill="#37577c"/><path d="M46 31l12-4 2 8-8 1z" fill="#38bfb2"/><path d="M34 26l12 3-8 5zM62 36l10-18 8 19-10-6zM92 20l6 9-4 8z" fill="#555b60"/><path d="M63 35l9-18 5 12-6 2z" fill="#f4f4f4"/><path d="M55 50q20 3 30-10-3 24-18 21-12-2-12-11z" fill="#f6f6f6" opacity=".7"/></svg>
</div>

<svg width="0" height="0" class="defs">
  <symbol id="owl" viewBox="0 0 32 32"><rect width="32" height="32" fill="#f8f1ec"/><g fill="none" stroke="#c9713f" stroke-width="1.300"><path d="M5 2q1 6 5 6 3 0 6 2 3-2 6-2 4 0 5-6" stroke="#b24a42"/><circle cx="11.500" cy="11" r="3.500" stroke="#b24a42"/><circle cx="20.500" cy="11" r="3.500"/><path d="M14 12l2 5 2-5M7 8q-2 6 0 10 2 8 9 8t9-8q2-4 0-10M8 16q0 6 8 8 8-2 8-8" stroke="#d9a25c"/><path d="M8 30h7M17 30h7"/></g></symbol>
  <symbol id="octocat" viewBox="0 0 24 24"><path d="M12 .297c-6.630 0-12 5.373-12 12 0 5.303 3.438 9.800 8.205 11.385.6.113.82-.258.82-.577 0-.285-.01-1.040-.015-2.040-3.338.724-4.042-1.610-4.042-1.610C4.422 18.070 3.633 17.700 3.633 17.700c-1.087-.744.084-.729.084-.729 1.205.084 1.838 1.236 1.838 1.236 1.070 1.835 2.809 1.305 3.495.998.108-.776.417-1.305.76-1.605-2.665-.3-5.466-1.332-5.466-5.930 0-1.310.465-2.380 1.235-3.220-.135-.303-.54-1.523.105-3.176 0 0 1.005-.322 3.300 1.230.96-.267 1.980-.399 3-.405 1.020.006 2.040.138 3 .405 2.280-1.552 3.285-1.230 3.285-1.230.645 1.653.24 2.873.12 3.176.765.84 1.230 1.910 1.230 3.220 0 4.610-2.805 5.625-5.475 5.920.42.36.81 1.096.81 2.220 0 1.606-.015 2.896-.015 3.286 0 .315.21.69.825.57C20.565 22.092 24 17.592 24 12.297c0-6.627-5.373-12-12-12"/></symbol>
  <symbol id="hint" viewBox="0 0 30 30"><circle cx="15" cy="15" r="15" fill="#e8e8e8"/><path d="M10.500 11.500q0-4.500 4.500-4.500t4.500 4q0 2.500-2.500 4-2 1.200-2 3.500" fill="none" stroke="#fff" stroke-width="3.400"/><circle cx="15" cy="22.500" r="2.300" fill="#fff"/></symbol>
</svg>
<script src="chart.js"></script>
</body>
</html>
```
FILE: styles.css
```css
* { box-sizing: border-box; margin: 0; }
body { width: 2880px; height: 1800px; overflow: hidden; position: relative; background: #1c2f4a; font-family: "Liberation Sans", Arial, sans-serif; color: #333; }
svg { display: block; flex: none; }
.sea { position: absolute; inset: 0; z-index: -1; }
.defs { position: absolute; }

.menubar { position: relative; z-index: 4; height: 44px; display: flex; justify-content: space-between; align-items: center; background: linear-gradient(90deg, #c8e4f3 0, #c3def1 50%, #cbe1ef 75%, #e2e5ed 97%); font: 27.500px Inter, sans-serif; color: #1b2f3d; white-space: nowrap; padding-right: 42px; }
.menus { display: grid; grid-template-columns: 69px 146px 124px 144px 140px 170px 127px 173px 124px 136px 100px; padding-left: 40px; align-items: center; line-height: 44px; letter-spacing: -.35px; }
.menus b { font-weight: 700; letter-spacing: .1px; }
.apple { width: 32px; height: 32px; margin-top: -5px; margin-left: -1px; fill: #14303d; }
.status { display: grid; grid-template-columns: 55px 64px 65px 82px 168px 74px 66px 56px 40px; align-items: center; }
.percent { font-size: 24px; letter-spacing: -.9px; line-height: 40px; }
.clock { letter-spacing: -.2px; margin-left: -2px; }

.window { position: relative; height: 1604px; margin-top: 2px; display: flex; flex-direction: column; background: #fff; border-radius: 10px; overflow: hidden; box-shadow: 0 10px 50px 20px rgba(0,0,0,.4); }
.tabstrip { height: 86px; background: #dfe0e4; border-top: 1px solid #7f9a8a; box-shadow: inset 0 2px 0 #f4f4f4; display: flex; align-items: flex-end; font: 24px Inter, sans-serif; color: #45484c; }
.lights { width: 157px; height: 86px; display: flex; gap: 16px; padding: 33px 0 0 26px; flex: none; }
.lights i { width: 24px; height: 24px; border-radius: 50%; }
.red { background: #ed6a5e; border: 1px solid #d35549; }
.amber { background: #f5bf4f; border: 1px solid #d8a13c; }
.green { background: #61c554; border: 1px solid #52a73f; }
.tab { width: 425.800px; height: 68px; flex: none; display: flex; align-items: center; padding-left: 23px; position: relative; }
.tab::after { content: ""; position: absolute; right: -1px; top: 15px; width: 2px; height: 40px; background: #8d9095; }
.tab.last::after, .tab.active::after { display: none; }
.fav { width: 32px; height: 32px; margin-right: 16px; }
.label { width: 299px; overflow: hidden; white-space: nowrap; letter-spacing: .05px; -webkit-mask-image: linear-gradient(90deg, #000 80%, transparent 98%); mask-image: linear-gradient(90deg, #000 80%, transparent 98%); line-height: 36px; }
.close { width: 18px; height: 18px; margin-left: 16px; stroke: #3e4145; stroke-width: 3; fill: none; }
.active { background: #fff; border-radius: 16px 16px 0 0; color: #3c4043; margin-left: -3px; }
.active::before { content: ""; position: absolute; left: -16px; right: -16px; bottom: 0; height: 16px; background: radial-gradient(circle at 0 0, transparent 16px, #fff 16.500px) left / 16px 16px no-repeat, radial-gradient(circle at 16px 0, transparent 16px, #fff 16.500px) right / 16px 16px no-repeat; }
.newtab { width: 24px; height: 24px; margin: 0 0 22px 31px; stroke: #3e4145; stroke-width: 3.500; }

.toolbar { height: 74px; border-bottom: 2px solid #d9dce0; display: flex; align-items: center; background: #fff; flex: none; padding-left: 28px; }
.nav { width: 32px; height: 32px; margin-right: 32px; fill: none; stroke-width: 3; }
.nav:nth-child(3) { margin-right: 28px; }
.omnibox { width: 2512px; height: 56px; border-radius: 28px; background: #f1f3f4; display: flex; align-items: center; padding: 0 21px 0 27px; }
.url { flex: 1; padding-left: 23px; font: 28px Inter, sans-serif; color: #202124; letter-spacing: -.05px; }
.url em { font-style: normal; color: #6b6e72; }
.translate { margin-right: 34px; }
.g { font-family: "Liberation Sans", sans-serif; font-weight: 700; }
.profile { width: 44px; height: 44px; margin-left: 22px; border-radius: 50%; background: #74a047; color: #fff; font: 24px/44px Inter, sans-serif; text-align: center; }
.kebab { width: 8px; height: 30px; margin-left: 38px; fill: #5f6368; }

.trial { height: 106px; position: relative; z-index: 3; background: linear-gradient(#eaf3f6 88%, #e2ebee); border-bottom: 6px solid #fdec4e; display: flex; align-items: center; padding-left: 43px; gap: 23px; font: 28px "Open Sans", sans-serif; color: #000; flex: none; white-space: nowrap; }
.trial p { margin-top: -2px; }
.trial b { font-weight: 700; letter-spacing: -.9px; }
.trial a { color: #4079a9; font-weight: 600; letter-spacing: -.5px; text-decoration: underline; text-decoration-thickness: 2px; text-underline-offset: 3px; }

.appbar { height: 120px; background: #333; display: flex; align-items: center; flex: none; position: relative; z-index: 2; box-shadow: 0 2px 18px rgba(0,0,0,.45); }
.logo { width: 70px; height: 56px; margin: 0 63px 0 26px; }
.crumbs { flex: 1; display: flex; align-items: center; font: 36px "Open Sans", sans-serif; color: #fff; white-space: nowrap; }
.crumbs b { font-weight: 600; color: #aeaeae; letter-spacing: -.5px; }
.crumbs svg { width: 12px; height: 20px; margin: 0 22px; fill: none; stroke: #888; stroke-width: 2.500; }
.crumbs span { letter-spacing: .05px; }
.waffle { width: 40px; height: 40px; margin-right: 40px; }
.user { width: 80px; height: 80px; border-radius: 50%; background: #fdec4e; margin-right: 40px; display: grid; place-items: center; }
.user svg { width: 25px; height: 34px; }

.workspace { flex: 1; display: flex; min-height: 0; }
.sidebar { width: 120px; flex: none; background: #333; display: flex; flex-direction: column; align-items: center; padding-top: 20px; gap: 20px; position: relative; box-shadow: 0 0 16px rgba(0,0,0,.5); }
.item { width: 80px; height: 80px; border-radius: 6px; display: grid; place-items: center; flex: none; }
.item svg { width: 40px; height: 40px; fill: none; stroke: #aeaeae; stroke-width: 3.600; }
.item.on { background: #202020; }
.item.on svg { stroke: #f7a339; }
.expand { width: 120px; height: 86px; margin-top: auto; border-top: 2px solid #484848; display: grid; place-items: center; padding-bottom: 4px; }
.expand svg { width: 14px; height: 24px; fill: none; stroke: #bbb; stroke-width: 3; }

main { flex: 1; padding: 0 130px; min-width: 0; }
.summary { height: 196px; display: flex; align-items: flex-start; white-space: nowrap; }
.period { flex: 1; padding-top: 84px; }
h1 { font-size: 48px; line-height: 56px; font-weight: 400; letter-spacing: -.82px; -webkit-text-stroke: 1px #fff; }
.period p { font-size: 26px; line-height: 30px; margin-top: 4px; color: #999; letter-spacing: .07px; }
.interval { font-size: 26px; line-height: 30px; margin: 116px 41px 0 0; letter-spacing: .04px; }
.edit { width: 170px; height: 60px; margin-top: 102px; border: 2px solid #dbdbdb; border-radius: 5px; background: #fff; color: #666; font: 26px "Liberation Sans", sans-serif; letter-spacing: .6px; padding: 0 0 2px; -webkit-text-stroke: .4px #666; box-shadow: 0 3px 4px rgba(0,0,0,.06); }
.cards { display: grid; grid-template-columns: 608px 592px 590px 608px; gap: 34px; }
.card { height: 254px; border: 2px solid #dbdbdb; border-radius: 9px; background: #f7f7f7; text-align: center; padding-top: 33px; position: relative; }
.card h2 { font-size: 28px; line-height: 32px; font-weight: 400; }
.value { font-size: 64px; line-height: 72px; height: 72px; margin-top: 30px; display: flex; justify-content: center; align-items: baseline; }
.value small { font-size: 32px; line-height: 36px; }
.grade { width: 60px; height: 60px; border-radius: 50%; background: #57a146; color: #fff; font: 700 44px/60px Inter, sans-serif; margin-right: 16px; align-self: center; margin-top: -4px; }
.card p { font-size: 32px; line-height: 36px; margin-top: 16px; color: #aaa; letter-spacing: .15px; }
.card .good { color: #96c93d; }
.card .bad { color: #f2564e; }
.hint { width: 30px; height: 30px; }
.corner { position: absolute; right: 18px; top: 18px; }
.chart-head { margin: 94px 0 28px 24px; display: flex; align-items: center; gap: 27px; height: 56px; }
.chart-head .hint { margin-top: 2px; }
.chart { width: 2480px; height: 590px; margin-left: 20px; }
.ylabels { font: 22px "DejaVu Sans", sans-serif; fill: #aaa; text-anchor: end; }
.xlabels { font: 22px "DejaVu Sans", sans-serif; fill: #666; text-anchor: middle; }

.agent { position: absolute; z-index: 3; right: 24px; bottom: 0; width: 294px; height: 92px; border-radius: 16px 16px 0 0; background: #666; color: #fff; display: flex; align-items: center; padding: 0 0 2px 25px; gap: 46px; font-size: 24.500px; -webkit-text-stroke: .3px #fff; box-shadow: 0 0 34px rgba(0,0,0,.5); white-space: nowrap; }
.agent svg { width: 30px; height: 28px; }

.dock { position: absolute; z-index: 5; left: 222px; top: 1648px; width: 2436px; height: 152px; padding: 0 8px; display: flex; background: linear-gradient(90deg, #4b6078, #4f6172 40%, #54606d 65%, #516477); border-radius: 10px 10px 0 0; box-shadow: 0 0 60px rgba(0,0,0,.28), 0 -1px 1px rgba(0,0,0,.25); }
.app { width: 128px; height: 152px; }
.divider { width: 2px; height: 112px; margin: 20px 26px 0 30px; background: #26384a; }
.run { fill: #000; }
.petals rect { mix-blend-mode: multiply; opacity: .9; }
.month { font: 22px "Liberation Sans", sans-serif; fill: #fff; text-anchor: middle; }
.day { font: 54px Inter, sans-serif; font-weight: 300; fill: #222; text-anchor: middle; }
.badge { font: 23px Inter, sans-serif; fill: #fff; text-anchor: middle; }
.office { font: 700 38px "Open Sans", sans-serif; fill: #fff; text-anchor: middle; }
.slide { font: 7px "Liberation Serif", serif; fill: #333; }
```
FILE: chart.js
```js
// Load-time samples, one per hour, grouped by run; heights are in thirds of a pixel below "top".
const runs = [
  { top: 1060, y: [1078,1066,1087,1090,1035,858,1084,1057,1011,1034,1127,1093,968,1081,1056,1011,998,1102,1075,1008,879,1071,1094,968,1072,1072,916,1072,913,1072,1086,1078,1078,682,1118,1050,1092,993,940,935,1072,1077,1077,1078,1099,1086,1061,1091,947,831,1118,1084,898,952,310,856] },
  { top: 1100, y: [958,355,984,656,937,955,741,737,793,919,989,936,938,933,893,832,686,890,954,995,967,424,947,948,909,884,705,976,735,920,534,860,954,896,930,957,917,957,702,970,556,880,839,952,980,957,875,945,927,992,960,737,956,954,971,980,958] },
  { top: 1220, y: [597,580,625,613,352,525,363,588,577,335,582,582,183,619,407,437,578,566,616,494,400,390,616,582,616,583,616,569,399,400,614,575,463,466,554,613,549,191,579,622,634,624,547,611,410,607,410,598,540,595,332,595,615,534,576,590] }
];
const left = 394, right = 2710, base = 1592;
const ys = runs.flatMap(r => r.y.map(v => r.top + v / 3));
// The last value of the second run and the first of the third are the same sample.
ys.splice(runs[0].y.length + runs[1].y.length - 1, 1);
const step = (right - left) / (ys.length - 1);
const pts = ys.map((y, i) => [left + 2 * Math.floor(i * step / 2 + 1e-6), y]);
const path = pts.map(p => p[0] + ',' + p[1].toFixed(1)).join(' ');
document.getElementById('line').setAttribute('points', path);
document.getElementById('area').setAttribute('points', `${left},${base} ${path} ${right},${base}`);
const dots = document.getElementById('dots');
for (const [x, y] of pts) {
  const c = document.createElementNS('http://www.w3.org/2000/svg', 'circle');
  c.setAttribute('cx', x);
  c.setAttribute('cy', y);
  c.setAttribute('r', 4);
  dots.appendChild(c);
}
```
